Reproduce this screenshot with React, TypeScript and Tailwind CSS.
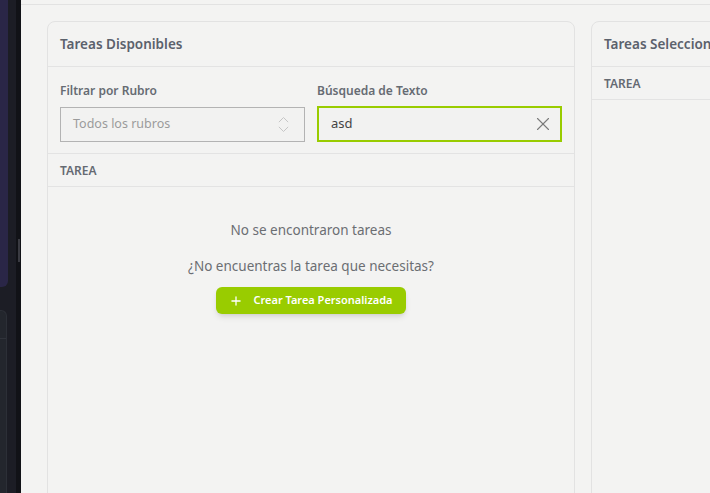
import { ChevronsUpDown, Plus, X } from 'lucide-react'

const font = { fontFamily: '"Noto Sans", "Open Sans", sans-serif' }

const Sidebar = () => (
  <aside className="relative w-[21px] shrink-0 bg-[#1c1d25] overflow-hidden">
    <div className="absolute left-0 top-0 w-[8px] h-[287px] bg-[#2a2647] rounded-br-md" />
    <div className="absolute left-0 top-[310px] w-[7px] h-[200px] bg-[#23262d] rounded-tr-md border-t border-r border-[#2c2f37]">
      <div className="mt-[27px] border-t border-[#30333b]" />
    </div>
    <div className="absolute right-0 top-0 w-[5px] h-full bg-[#111217]">
      <div className="ml-[2px] mt-[239px] w-[2px] h-[23px] bg-[#3a3b42]" />
    </div>
  </aside>
)

const TaskHeaderRow = () => (
  <div className="h-[33px] flex items-center pt-[1px] px-3 border-b border-[#e3e3e3] text-[12px] font-semibold text-[#656a72]">
    TAREA
  </div>
)

const AvailableTasks = () => (
  <section className="w-[528px] shrink-0 h-[520px] rounded-lg border border-[#e2e2e2] bg-[#f3f3f2]">
    <header className="h-[45px] flex items-center px-3 border-b border-[#e3e3e3]">
      <h2 className="text-[13.5px] font-semibold text-[#5b616c]">Tareas Disponibles</h2>
    </header>

    <div className="grid grid-cols-2 gap-3 px-3 pt-[15px] pb-[11px] border-b border-[#e3e3e3]">
      <div>
        <label className="block text-[12px] leading-[18px] font-semibold text-[#666b73] mb-[7px]">Filtrar por Rubro</label>
        <div className="h-[35px] flex items-center justify-between pl-3 pr-[10px] border border-[#b3b3b3] bg-[#f2f2f1]">
          <span className="text-[12.5px] text-[#9b9b9b]">Todos los rubros</span>
          <ChevronsUpDown size={21} strokeWidth={1.1} className="text-[#c4c4c4]" />
        </div>
      </div>
      <div>
        <label className="block text-[12px] leading-[18px] font-semibold text-[#666b73] mb-[6px]">Búsqueda de Texto</label>
        <div className="h-[36px] flex items-center justify-between pl-3 pr-[6px] border-2 border-[#99cc00] bg-[#f2f2f1]">
          <span className="text-[13px] text-[#444]">asd</span>
          <X size={22} strokeWidth={1.2} className="text-[#7a7a7a]" />
        </div>
      </div>
    </div>

    <TaskHeaderRow />

    <div className="flex flex-col items-center pt-[33px]">
      <p className="text-[13.5px] leading-[20px] text-[#6b6e73]">No se encontraron tareas</p>
      <p className="mt-[16px] text-[13.5px] leading-[20px] text-[#6b6e73]">¿No encuentras la tarea que necesitas?</p>
      <button className="mt-[11px] h-[27px] px-[13px] flex items-center gap-[10px] rounded-md bg-[#99cc00] text-white text-[11px] font-semibold shadow-md">
        <Plus size={14} strokeWidth={2.2} />
        Crear Tarea Personalizada
      </button>
    </div>
  </section>
)

const SelectedTasks = () => (
  <section className="w-[528px] shrink-0 h-[520px] rounded-lg border border-[#e2e2e2] bg-[#f3f3f2]">
    <header className="h-[45px] flex items-center px-3 border-b border-[#e3e3e3]">
      <h2 className="text-[13.5px] font-semibold text-[#5b616c] whitespace-nowrap">Tareas Seleccionadas</h2>
    </header>
    <TaskHeaderRow />
  </section>
)

export default function App() {
  return (
    <div className="flex w-[710px] h-[493px] overflow-hidden" style={font}>
      <Sidebar />
      <main className="flex-1 min-w-0 flex flex-col bg-[#f3f3f2] overflow-hidden">
        <div className="h-[5px] shrink-0 border-b border-[#e2e2e2]" />
        <div className="flex gap-4 pl-[26px] pt-4">
          <AvailableTasks />
          <SelectedTasks />
        </div>
      </main>
    </div>
  )
}
